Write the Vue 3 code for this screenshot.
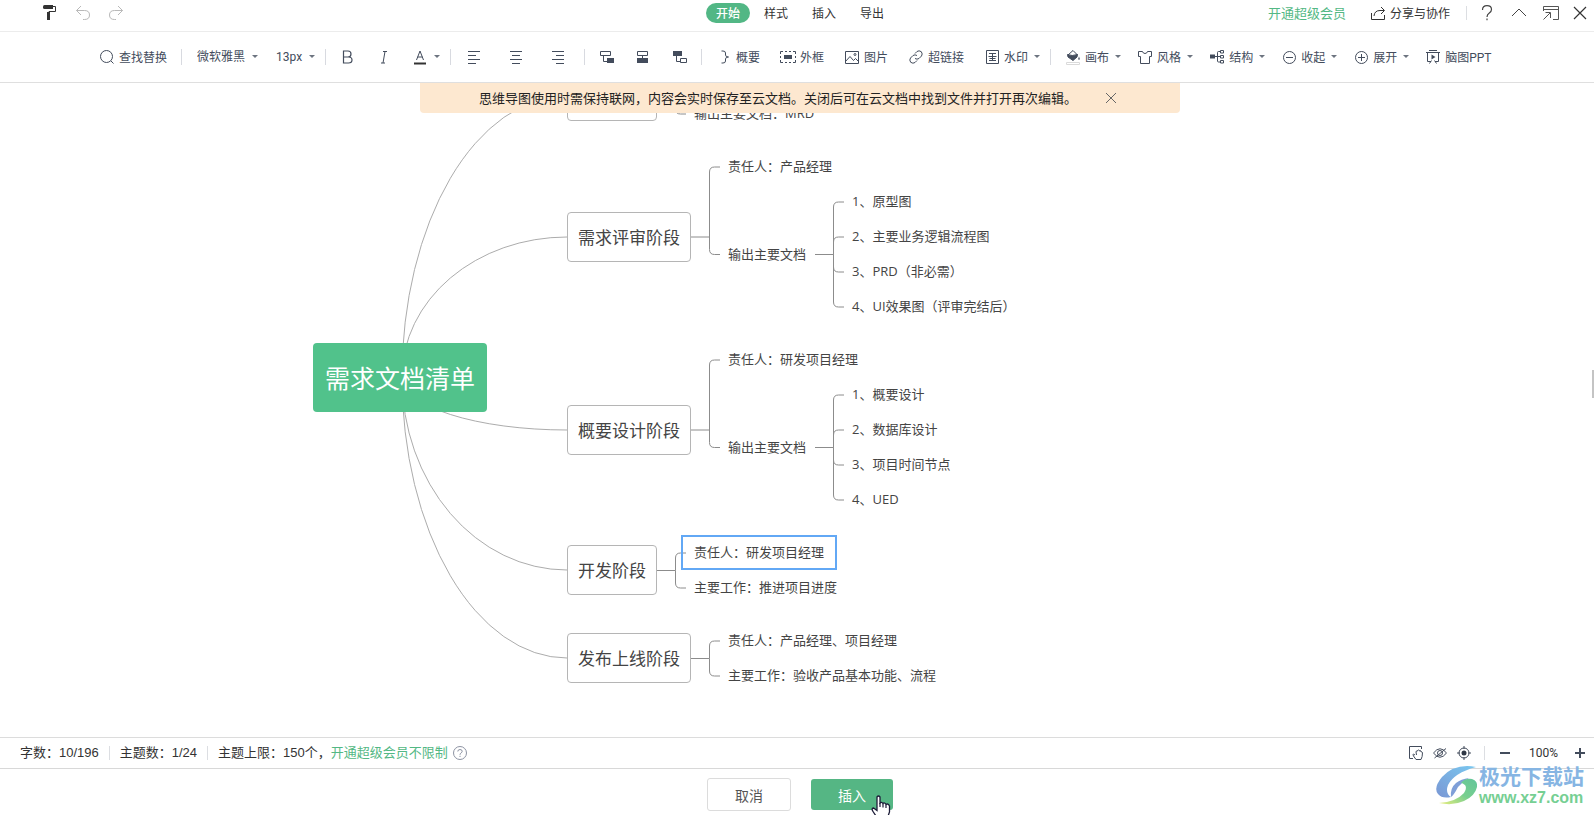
<script setup>
import { ref } from 'vue'

const tabs = ['开始', '样式', '插入', '导出']
const activeTab = ref('开始')
const bannerOpen = ref(true)
const fontFamily = ref('微软雅黑')
const fontSize = ref('13px')

const insertTools = [
  { id: 'summary', label: '概要' },
  { id: 'frame', label: '外框' },
  { id: 'image', label: '图片' },
  { id: 'link', label: '超链接' },
  { id: 'watermark', label: '水印', caret: true },
]
const viewTools = [
  { id: 'fill', label: '画布', caret: true },
  { id: 'style', label: '风格', caret: true },
  { id: 'structure', label: '结构', caret: true },
  { id: 'collapse', label: '收起', caret: true },
  { id: 'expand', label: '展开', caret: true },
  { id: 'ppt', label: '脑图PPT' },
]
const aligns = [
  { id: 'left', title: '左对齐', d: 'M2 2.5H14M2 6.5H10M2 10.5H14M2 14.5H10' },
  { id: 'center', title: '居中', d: 'M2 2.5H14M4 6.5H12M2 10.5H14M4 14.5H12' },
  { id: 'right', title: '右对齐', d: 'M2 2.5H14M6 6.5H14M2 10.5H14M6 14.5H14' },
]

const root = { text: '需求文档清单', x: 313, y: 260 }
const topics = [
  { text: '', x: 567, y: -12, w: 90 },
  { text: '需求评审阶段', x: 567, y: 129, w: 124 },
  { text: '概要设计阶段', x: 567, y: 322, w: 124 },
  { text: '开发阶段', x: 567, y: 462, w: 90 },
  { text: '发布上线阶段', x: 567, y: 550, w: 124 },
]
const leaves = [
  { text: '输出主要文档：MRD', x: 694, y: 31 },
  { text: '责任人：产品经理', x: 728, y: 84 },
  { text: '输出主要文档', x: 728, y: 172 },
  { text: '1、原型图', x: 852, y: 119 },
  { text: '2、主要业务逻辑流程图', x: 852, y: 154 },
  { text: '3、PRD（非必需）', x: 852, y: 189 },
  { text: '4、UI效果图（评审完结后）', x: 852, y: 224 },
  { text: '责任人：研发项目经理', x: 728, y: 277 },
  { text: '输出主要文档', x: 728, y: 365 },
  { text: '1、概要设计', x: 852, y: 312 },
  { text: '2、数据库设计', x: 852, y: 347 },
  { text: '3、项目时间节点', x: 852, y: 382 },
  { text: '4、UED', x: 852, y: 417 },
  { text: '责任人：研发项目经理', x: 694, y: 470, selected: true },
  { text: '主要工作：推进项目进度', x: 694, y: 505 },
  { text: '责任人：产品经理、项目经理', x: 728, y: 558 },
  { text: '主要工作：验收产品基本功能、流程', x: 728, y: 593 },
]

const hub = { x: 402, y: 294 }
const curves = topics.map((t) => {
  const end = t.y + 25
  const ry = Math.abs(end - hub.y)
  return `M${hub.x} ${hub.y}A${t.x - hub.x} ${ry} 0 0 ${end < hub.y ? 1 : 0} ${t.x} ${end}`
})

function bracket(from, mid, spine, to, ys) {
  const arms = ys.map((y) => {
    const bend = y < mid ? y + 5 : y - 5
    return `M${spine} ${mid}V${bend}Q${spine} ${y} ${spine + 5} ${y}H${to}`
  })
  return `M${from} ${mid}H${spine}` + arms.join('')
}
const brackets = [
  bracket(657, 13, 675.5, 686, [-5, 31]),
  bracket(691, 154, 709.5, 720, [84, 171.5]),
  bracket(815, 171.5, 833.5, 844, [119, 154, 189, 224]),
  bracket(691, 347, 709.5, 720, [277, 364.5]),
  bracket(815, 364.5, 833.5, 844, [312, 347, 382, 417]),
  bracket(657, 487.5, 675.5, 686, [470, 505]),
  bracket(691, 575.5, 709.5, 720, [558, 593]),
]
</script>

<template>
  <div class="app">
    <header class="titlebar">
      <div class="quick">
        <button class="icon-btn" title="格式刷">
          <svg width="16" height="18" viewBox="0 0 16 18">
            <path d="M1 2.5Q1 1 2.500 1H11V5H2.500Q1 5 1 3.500Z" fill="#333" />
            <path d="M11 2.500H13.500V7.500H7V16" fill="none" stroke="#333" stroke-width="1" />
            <path d="M5 8H8V16H5Z" fill="#333" />
          </svg>
        </button>
        <button class="icon-btn" title="撤销">
          <svg width="16" height="18" viewBox="0 0 16 18" fill="none" stroke="#b9b9b9">
            <path d="M6 2L1.500 6.500L6 11M1.500 6.500H9.500Q14.500 6.500 14.500 11Q14.500 15.500 9.500 15.500H8" />
          </svg>
        </button>
        <button class="icon-btn" title="重做">
          <svg width="16" height="18" viewBox="0 0 16 18" fill="none" stroke="#b9b9b9">
            <path d="M10 2L14.500 6.500L10 11M14.500 6.500H6.500Q1.500 6.500 1.500 11Q1.500 15.500 6.500 15.500H8" />
          </svg>
        </button>
      </div>
      <nav class="tabs">
        <button
          v-for="tab in tabs"
          :key="tab"
          class="tab"
          :class="{ active: tab === activeTab }"
          @click="activeTab = tab"
        >{{ tab }}</button>
      </nav>
      <div class="window-tools">
        <a class="vip" href="#">开通超级会员</a>
        <button class="share">
          <svg width="16" height="16" viewBox="0 0 16 16" fill="none" stroke="#333">
            <path d="M1.500 8V14.500H14.500V10M4 11Q4.500 5.500 10 5.500H14M11 2L14.500 5.500L11 9" />
          </svg>
          <span>分享与协作</span>
        </button>
        <i class="rule"></i>
        <button class="icon-btn" title="帮助">
          <svg width="16" height="18" viewBox="0 0 16 18" fill="none" stroke="#444" stroke-width="1.200">
            <path d="M3.500 6Q3.500 1.700 8 1.700Q12.500 1.700 12.500 5.500Q12.500 7.500 10.300 9Q8 10.500 8 13M8 14.500V16.300" />
          </svg>
        </button>
        <button class="icon-btn" title="收起">
          <svg width="16" height="18" viewBox="0 0 16 18" fill="none" stroke="#444">
            <path d="M1 12L8 5L15 12" />
          </svg>
        </button>
        <button class="icon-btn" title="弹出">
          <svg width="16" height="18" viewBox="0 0 16 18" fill="none" stroke="#555">
            <path d="M.5 7V2.500H15.500V15.500H10M.5 5.500H15.500M.5 15.500L7 9M2.500 8.500H7.500V14" />
          </svg>
        </button>
        <button class="icon-btn close" title="关闭">
          <svg width="16" height="18" viewBox="0 0 16 18" fill="none" stroke="#333" stroke-width="1.200">
            <path d="M2 3L14 15M14 3L2 15" />
          </svg>
        </button>
      </div>
    </header>

    <div class="toolbar">
      <button class="tool">
        <svg width="16" height="16" viewBox="0 0 16 16" fill="none" stroke="#434c5c">
          <circle cx="7.500" cy="7.500" r="6" /><path d="M12 12L14.500 14.500" />
        </svg>
        <span>查找替换</span>
      </button>
      <i class="divider"></i>
      <div class="group picks">
        <label class="pick">
          <select v-model="fontFamily" aria-label="字体"><option>微软雅黑</option></select>
          <svg class="caret" width="8" height="8" viewBox="0 0 8 8"><path d="M2 2H8L5 5Z" /></svg>
        </label>
        <label class="pick">
          <select v-model="fontSize" aria-label="字号"><option>13px</option></select>
          <svg class="caret" width="8" height="8" viewBox="0 0 8 8"><path d="M2 2H8L5 5Z" /></svg>
        </label>
      </div>
      <i class="divider near"></i>
      <div class="group marks">
        <button class="icon-btn" title="加粗">
          <svg width="16" height="16" viewBox="0 0 16 16" fill="none" stroke="#434c5c" stroke-width="1.200">
            <path d="M3.500 2H8Q11 2 11 5Q11 8 8 8H3.500ZM3.500 8H8.500Q12 8 12 11Q12 14 8.500 14H3.500V2" />
          </svg>
        </button>
        <button class="icon-btn" title="斜体">
          <svg width="16" height="16" viewBox="0 0 16 16" fill="none" stroke="#434c5c">
            <path d="M7 2.500H11M5 14H9M9 2.500L7 14" />
          </svg>
        </button>
        <button class="tool color" title="字体颜色">
          <svg width="16" height="16" viewBox="0 0 16 16" fill="none" stroke="#434c5c">
            <path d="M4.500 11L8 2L11.500 11M5.500 8H10.500" /><path d="M2 14.500H14" stroke-width="2" stroke="#333" />
          </svg>
          <svg class="caret" width="8" height="8" viewBox="0 0 8 8"><path d="M2 2H8L5 5Z" /></svg>
        </button>
      </div>
      <i class="divider near"></i>
      <div class="group aligns">
        <button v-for="a in aligns" :key="a.id" class="icon-btn" :title="a.title">
          <svg width="16" height="16" viewBox="0 0 16 16" fill="none" stroke="#434c5c"><path :d="a.d" /></svg>
        </button>
      </div>
      <i class="divider"></i>
      <div class="group">
        <button class="icon-btn" title="下级主题">
          <svg width="16" height="16" viewBox="0 0 16 16" fill="none" stroke="#434c5c">
            <path d="M1.500 2.500H11.500V6.500H1.500ZM4.500 6.500V12.500H8" /><path d="M8 9H15V14H8Z" fill="#434c5c" stroke="none" />
          </svg>
        </button>
        <button class="icon-btn" title="同级主题">
          <svg width="16" height="16" viewBox="0 0 16 16" fill="none" stroke="#434c5c">
            <path d="M2.500 2.500H12.500V6.500H2.500ZM7.500 6.500V10" /><path d="M2 9H13V14H2Z" fill="#434c5c" stroke="none" />
          </svg>
        </button>
        <button class="icon-btn" title="上级主题">
          <svg width="16" height="16" viewBox="0 0 16 16" fill="none" stroke="#434c5c">
            <path d="M2 2H11V7H2Z" fill="#434c5c" stroke="none" /><path d="M5.500 7V12.500H9M9.500 9.500H15.500V13.500H9.500Z" />
          </svg>
        </button>
      </div>
      <i class="divider"></i>
      <div class="group">
        <button v-for="t in insertTools" :key="t.id" class="tool">
          <svg width="16" height="16" viewBox="0 0 16 16" fill="none" stroke="#434c5c">
            <path v-if="t.id === 'summary'" d="M5.500 2H7Q9.500 2 9.500 4V6Q9.500 8 12.500 8Q9.500 8 9.500 10V12Q9.500 14 7 14H5.500" />
            <template v-else-if="t.id === 'frame'">
              <path d="M.5 5V2.500H3M13 2.500H15.500V5M15.500 11V13.500H13M3 13.500H.5V11M5 2.500H7M9 2.500H11M5 13.500H7M9 13.500H11M.5 7V9M15.500 7V9" />
              <path d="M4 6H12V10H4Z" fill="#434c5c" stroke="none" />
            </template>
            <template v-else-if="t.id === 'image'">
              <path d="M1.500 2.500H14.500V14.500H1.500ZM1.500 12.500L6 7.500L9.500 11.500L11.500 9.500L14.500 12.500" /><circle cx="11" cy="5.500" r="1" />
            </template>
            <template v-else-if="t.id === 'link'">
              <path d="M7 4.500L9 2.500Q11 1 13.300 2.700Q15 5 13.500 7L11 9.500Q9 10.800 7 9.500M9 11.500L7 13.500Q5 15 2.700 13.300Q1 11 2.500 9L5 6.500Q7 5.200 9 6.500" />
            </template>
            <template v-else>
              <path d="M2.500 1.500H14.500V14.500H2.500ZM5 4.500H12M4.500 7.500H12.500M5.500 9.500H11.500M5 11.500H12M8.500 4.500V11.500" />
            </template>
          </svg>
          <span>{{ t.label }}</span>
          <svg v-if="t.caret" class="caret" width="8" height="8" viewBox="0 0 8 8"><path d="M2 2H8L5 5Z" /></svg>
        </button>
      </div>
      <i class="divider near"></i>
      <div class="group views">
        <button v-for="t in viewTools" :key="t.id" class="tool">
          <svg width="16" height="16" viewBox="0 0 16 16" fill="none" stroke="#434c5c">
            <template v-if="t.id === 'fill'">
              <path d="M3 6L8 1.500L12.500 6" /><path d="M2.500 5.500Q7 7.500 12.500 5.500L12 8L8 11.500L3 8Z" fill="#434c5c" /><path d="M14 7.500L15 10.500H13Z" fill="#434c5c" stroke="none" />
              <path d="M1.500 13.500H14.500V15.500H1.500Z" stroke="#dadada" />
            </template>
            <path v-else-if="t.id === 'style'" d="M1.500 2.500H5.500Q6 4.500 8 4.500Q10 4.500 10.500 2.500H14.500V7.500H12.500V14.500H3.500V7.500H1.500Z" />
            <template v-else-if="t.id === 'structure'">
              <path d="M1 5.500H6V9.500H1Z" fill="#434c5c" stroke="none" /><path d="M6 7.500H11M11 2.500H9.500Q8.500 2.500 8.500 3.500V12Q8.500 13 9.500 13H11M11.500 1.500H14.500V4H11.500ZM11.500 6.500H14.500V9H11.500ZM11.500 11.500H14.500V14H11.500Z" />
            </template>
            <template v-else-if="t.id === 'collapse'"><circle cx="8.500" cy="8.500" r="6" /><path d="M5 8.500H12" /></template>
            <template v-else-if="t.id === 'expand'"><circle cx="8.500" cy="8.500" r="6" /><path d="M5 8.500H12M8.500 5V12" /></template>
            <template v-else>
              <path d="M4 1.500H12M1 3.500H15M2.500 3.500V12.500H6M13.500 3.500V12.500H10M6.500 11.500L4.500 14.500M9.500 11.500L11.500 14.500" /><path d="M6.500 5.500L10.500 8L6.500 10.500Z" fill="#434c5c" stroke="none" />
            </template>
          </svg>
          <span>{{ t.label }}</span>
          <svg v-if="t.caret" class="caret" width="8" height="8" viewBox="0 0 8 8"><path d="M2 2H8L5 5Z" /></svg>
        </button>
      </div>
    </div>

    <main class="canvas">
      <svg class="links" width="1100" height="660" viewBox="0 0 1100 660" fill="none">
        <path v-for="(d, i) in curves" :key="'c' + i" :d="d" stroke="#acacac" />
        <path v-for="(d, i) in brackets" :key="'b' + i" :d="d" stroke="#8c8c8c" />
      </svg>
      <div class="node root" :style="{ left: root.x + 'px', top: root.y + 'px' }">{{ root.text }}</div>
      <div
        v-for="t in topics"
        :key="t.y"
        class="node topic"
        :style="{ left: t.x + 'px', top: t.y + 'px', width: t.w + 'px' }"
      >{{ t.text }}</div>
      <div
        v-for="l in leaves"
        :key="l.x + '-' + l.y"
        class="node leaf"
        :class="{ selected: l.selected }"
        :style="{ left: l.x - 13 + 'px', top: l.y - 18 + 'px' }"
      >{{ l.text }}</div>
      <div v-if="bannerOpen" class="banner-row">
        <div class="banner">
          <span>思维导图使用时需保持联网，内容会实时保存至云文档。关闭后可在云文档中找到文件并打开再次编辑。</span>
          <button class="icon-btn" title="关闭提示" @click="bannerOpen = false">
            <svg width="12" height="12" viewBox="0 0 12 12" fill="none" stroke="#666"><path d="M1 1L11 11M11 1L1 11" /></svg>
          </button>
        </div>
      </div>
      <div class="edge-handle"></div>
    </main>

    <div class="status">
      <span>字数：10/196</span>
      <i class="rule"></i>
      <span>主题数：1/24</span>
      <i class="rule"></i>
      <span>主题上限：150个，<a href="#">开通超级会员不限制</a></span>
      <button class="icon-btn help" title="说明">
        <svg width="16" height="16" viewBox="0 0 16 16" fill="none" stroke="#8d93a3">
          <circle cx="8" cy="8" r="6.500" /><path d="M5.800 6.500Q5.800 4.500 8 4.500Q10.200 4.500 10.200 6.300Q10.200 7.300 9 8Q8 8.600 8 9.800M8 10.800V12" />
        </svg>
      </button>
      <div class="zoom">
        <button class="icon-btn" title="拖动画布">
          <svg width="16" height="16" viewBox="0 0 16 16" fill="none" stroke="#434c5c">
            <path d="M5 13.500H1.500V1.500H13.500V4" /><path d="M7 10L5.500 9Q4.500 9.500 5.500 11L8 14.500H13Q14.500 12 14.500 7.500Q14 6.500 13 7V6Q12 5 11.500 6V5.500Q10.500 4.500 9.500 5.500V6Q8 5.500 8 7L8.500 10" />
          </svg>
        </button>
        <button class="icon-btn" title="隐藏">
          <svg width="16" height="16" viewBox="0 0 16 16" fill="none" stroke="#434c5c">
            <path d="M1.500 8Q8 -.5 14.500 8Q8 16.500 1.500 8ZM2.500 13L14 3.500" /><circle cx="8" cy="8" r="2.500" />
          </svg>
        </button>
        <button class="icon-btn" title="定位">
          <svg width="16" height="16" viewBox="0 0 16 16" fill="none" stroke="#434c5c">
            <circle cx="8" cy="8" r="5" /><circle cx="8" cy="8" r="2.500" fill="#2f3745" stroke="none" /><path d="M8 1V4M8 12V15M1 8H4M12 8H15" />
          </svg>
        </button>
        <i class="rule"></i>
        <button class="icon-btn" title="缩小"><svg width="12" height="12" viewBox="0 0 12 12"><path d="M1 5H11V7H1Z" fill="#434c5c" /></svg></button>
        <span class="percent">100%</span>
        <button class="icon-btn" title="放大"><svg width="12" height="12" viewBox="0 0 12 12"><path d="M1 5H5V1H7V5H11V7H7V11H5V7H1Z" fill="#434c5c" /></svg></button>
      </div>
    </div>

    <footer class="actions">
      <button class="cancel">取消</button>
      <button class="insert">插入
        <svg class="pointer" width="20" height="24" viewBox="0 0 20 24">
          <path d="M6 2Q7.500 0 9 2V8Q10.500 6.500 12 8.500Q13.500 7 15 9.500Q17 8 18.500 11V17L16 24H7L2 16.500Q0 13.500 2.500 13L6 15.500Z" fill="#fff" stroke="#1c1c38" stroke-width="1.300" />
          <path d="M9 8V12M12 9V12.500M15 10V13" stroke="#1c1c38" stroke-width="1.200" fill="none" />
        </svg>
      </button>
    </footer>

    <div class="watermark">
      <svg width="42" height="42" viewBox="0 0 42 42">
        <defs>
          <linearGradient id="wm-blue" x1="0" y1="1" x2="1" y2="0">
            <stop offset="0" stop-color="#7a97d4" /><stop offset="1" stop-color="#79c8f0" />
          </linearGradient>
          <linearGradient id="wm-green" x1="0" y1="1" x2="1" y2="0">
            <stop offset="0" stop-color="#e9ee7d" /><stop offset=".5" stop-color="#78cf8e" /><stop offset="1" stop-color="#62c59a" />
          </linearGradient>
        </defs>
        <path d="M40 2Q19 -2 6 12Q-3 23 2 29Q6 34 15 32Q9 28 12 20Q18 8 40 2Z" fill="url(#wm-blue)" />
        <path d="M15 32Q14 23 20 18Q25 14 33 13Q26 17 22 22Q18 30 15 32Z" fill="#7f9fd8" />
        <path d="M25 18Q29 13 36 14Q42 16 41 22Q39 31 28 36Q17 41 3 38Q20 37 28 28Q33 20 25 18Z" fill="url(#wm-green)" />
      </svg>
      <div class="wm-text"><strong>极光下载站</strong><b>www.xz7.com</b></div>
    </div>
  </div>
</template>

<style>
body {
  margin: 0;
  background: #fff;
}
</style>

<style scoped>
.app {
  position: relative;
  display: flex;
  flex-direction: column;
  height: 100vh;
  overflow: hidden;
  color: #333;
  font-family: Roboto, "Noto Sans CJK SC", sans-serif;
  font-size: 12px;
}
.app * {
  box-sizing: border-box;
}
button,
select {
  margin: 0;
  padding: 0;
  border: 0;
  background: none;
  color: inherit;
  font: inherit;
  white-space: nowrap;
}
a {
  color: #53b884;
  text-decoration: none;
}
svg {
  display: block;
  flex: none;
}
.icon-btn {
  display: flex;
  align-items: center;
  justify-content: center;
}
.rule {
  width: 1px;
  height: 14px;
  background: #dcdee2;
}

.titlebar {
  flex: none;
  display: grid;
  grid-template-columns: 1fr auto 1fr;
  align-items: center;
  height: 32px;
  padding: 0 0 5px 6px;
  border-bottom: 1px solid #ececec;
}
.quick {
  display: flex;
  gap: 17px;
  padding-left: 36px;
}
.tabs {
  display: flex;
  gap: 4px;
}
.tab {
  width: 44px;
  height: 20px;
  padding-bottom: 2px;
  border-radius: 10px;
}
.tab.active {
  background: #52b785;
  color: #fff;
  font-weight: 500;
}
.window-tools {
  display: flex;
  align-items: center;
  justify-content: flex-end;
  gap: 16px;
  padding-right: 6px;
}
.close {
  margin-left: -3px;
}
.vip {
  margin-right: 8px;
  padding-bottom: 2px;
  font-size: 13px;
}
.share {
  display: flex;
  align-items: center;
  gap: 4px;
}
.share span {
  padding-bottom: 2px;
}
.window-tools .rule {
  margin-right: -4px;
}

.toolbar {
  flex: none;
  display: flex;
  align-items: center;
  height: 51px;
  padding-left: 99px;
  border-bottom: 1px solid #dfdfdf;
  color: #434c5c;
}
.tool,
.pick {
  display: flex;
  align-items: center;
  gap: 4px;
}
.tool span {
  padding-bottom: 1px;
}
.pick select {
  appearance: none;
}
.caret {
  fill: #6d7480;
}
.divider {
  width: 1px;
  height: 16px;
  margin: 0 14px;
  background: #d8dae0;
}
.divider.near {
  margin-left: 10px;
}
.group {
  display: flex;
  align-items: center;
  gap: 20px;
}
.group.picks {
  gap: 18px;
  padding-left: 1px;
}
.group.aligns {
  gap: 26px;
  padding: 0 4px 0 1px;
}
.group.views {
  gap: 16px;
}

.canvas {
  position: relative;
  flex: 1;
  overflow: hidden;
  font-family: "Open Sans", "Noto Sans CJK SC", sans-serif;
}
.links {
  position: absolute;
  left: 0;
  top: 0;
}
.node {
  position: absolute;
  display: flex;
  align-items: center;
  justify-content: center;
  padding-bottom: 2px;
  color: #444;
  white-space: nowrap;
}
.root {
  width: 174px;
  height: 69px;
  border-radius: 4px;
  background: #51c28b;
  color: #fff;
  font-size: 25px;
}
.topic {
  height: 50px;
  border: 1px solid #b5b5b5;
  border-radius: 4px;
  background: #fff;
  font-size: 17px;
}
.leaf {
  height: 35px;
  padding: 0 11px 2px;
  border: 2px solid transparent;
  font-size: 13px;
}
.leaf.selected {
  border-color: #62a8f5;
}
.banner-row {
  position: absolute;
  left: 6px;
  right: 0;
  top: 0;
  display: flex;
  justify-content: center;
}
.banner {
  display: flex;
  align-items: center;
  gap: 28px;
  width: 760px;
  height: 30px;
  padding-left: 59px;
  border-radius: 0 0 4px 4px;
  background: #fde8d0;
  color: #222;
  font-size: 13px;
}
.banner span {
  padding-bottom: 2px;
}
.edge-handle {
  position: absolute;
  right: 0;
  top: 287px;
  width: 2px;
  height: 28px;
  background: #c4c4c4;
}

.status {
  flex: none;
  display: flex;
  align-items: center;
  gap: 10px;
  height: 32px;
  padding: 0 8px 1px 20px;
  border-top: 1px solid #dcdcdc;
  border-bottom: 1px solid #d8d8d8;
  font-family: "Liberation Sans", "Noto Sans CJK SC", sans-serif;
  font-size: 13px;
}
.status span {
  padding-bottom: 2px;
}
.help {
  margin-left: -6px;
}
.zoom {
  display: flex;
  align-items: center;
  gap: 8px;
  margin-left: auto;
}
.zoom .rule {
  margin: 0 6px 0 4px;
}
.zoom .percent {
  margin: 0 8px 0 10px;
  padding: 0;
  font-family: Roboto, sans-serif;
  font-size: 12px;
}

.actions {
  flex: none;
  display: flex;
  align-items: center;
  justify-content: center;
  gap: 20px;
  height: 46px;
  padding: 5px 0 0 6px;
  font-size: 14px;
}
.cancel {
  width: 84px;
  height: 33px;
  border: 1px solid #dcdcdc;
  border-radius: 3px;
  color: #555;
}
.insert {
  position: relative;
  width: 82px;
  height: 31px;
  border-radius: 3px;
  background: #55b684;
  color: #fff;
}
.pointer {
  position: absolute;
  left: 60px;
  top: 16px;
}

.watermark {
  position: absolute;
  right: 10px;
  bottom: 8px;
  display: flex;
  align-items: center;
  gap: 1px;
}
.wm-text {
  display: flex;
  flex-direction: column;
  font-family: "Liberation Sans", "Noto Sans CJK SC", sans-serif;
}
.wm-text strong {
  color: #86b5e3;
  font-size: 21px;
  line-height: 24px;
}
.wm-text b {
  color: #76cf93;
  font-size: 16px;
  line-height: 18px;
}
</style>
